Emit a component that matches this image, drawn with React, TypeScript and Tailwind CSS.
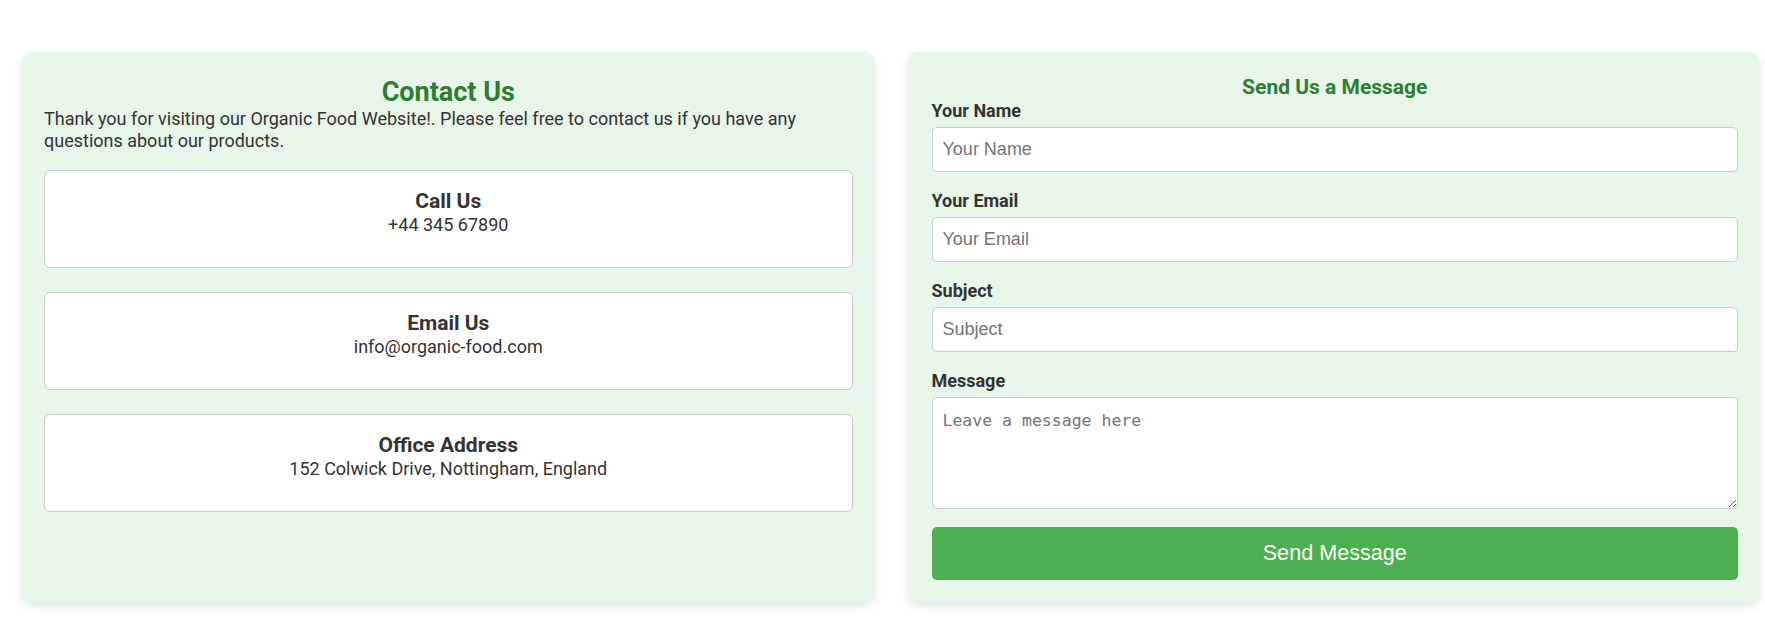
import React from "react";

const infoCards = [
  { title: "Call Us", text: "+44 345 67890" },
  { title: "Email Us", text: "info@organic-food.com" },
  { title: "Office Address", text: "152 Colwick Drive, Nottingham, England" },
];

const fields = [
  { id: "name", label: "Your Name", type: "text" },
  { id: "email", label: "Your Email", type: "email" },
  { id: "subject", label: "Subject", type: "text" },
];

export default function App() {
  return (
    <div className="min-h-[628px] bg-white pt-[52px] pl-[22px] pr-[5px] font-['Roboto',sans-serif] text-[18px] text-[#333]">
      <div className="grid grid-cols-2 gap-[33px]">
        {/* contact info */}
        <div className="rounded-[10px] bg-[#e8f5e9] px-[22px] pt-[24px] shadow-[0_4px_10px_rgba(0,0,0,0.1)]">
          <h2 className="text-center text-[27px] leading-[32px] font-bold text-[#2e7d32]">
            Contact Us
          </h2>
          <p className="mb-[18px] text-[18px] leading-[22px]">
            Thank you for visiting our Organic Food Website!. Please feel free
            to contact us if you have any questions about our products.
          </p>
          <div className="flex flex-col gap-[24px]">
            {infoCards.map((c) => (
              <div
                key={c.title}
                className="rounded-[6px] border border-[#ccc] bg-white px-4 pt-[18px] pb-[16px] text-center"
              >
                <h3 className="text-[21px] leading-[24.6px] font-bold">{c.title}</h3>
                <p className="mb-[16px] text-[18px] leading-[21.4px]">{c.text}</p>
              </div>
            ))}
          </div>
        </div>

        {/* form */}
        <div className="rounded-[10px] bg-[#e8f5e9] pt-[23px] pr-[22px] pb-[22px] pl-[24px] shadow-[0_4px_10px_rgba(0,0,0,0.1)]">
          <h3 className="text-center text-[21px] leading-[24.6px] font-bold text-[#2e7d32]">
            Send Us a Message
          </h3>
          <form className="flex flex-col">
            {fields.map((f) => (
              <div key={f.id} className="mb-[18px]">
                <label
                  htmlFor={f.id}
                  className="mb-[6px] block text-[18px] leading-[21px] font-bold"
                >
                  {f.label}
                </label>
                <input
                  id={f.id}
                  type={f.type}
                  placeholder={f.label}
                  className="block h-[45px] w-full rounded-[5px] border border-[#ccc] bg-white px-[10px] font-['Liberation_Sans',Arial,sans-serif] text-[18px] outline-none placeholder:text-[#757575]"
                />
              </div>
            ))}
            <div className="mb-[18px]">
              <label
                htmlFor="message"
                className="mb-[6px] block text-[18px] leading-[21px] font-bold"
              >
                Message
              </label>
              <textarea
                id="message"
                placeholder="Leave a message here"
                className="block h-[112px] w-full rounded-[5px] border border-[#ccc] bg-white px-[10px] pt-[13px] pb-[10px] font-['DejaVu_Sans_Mono',monospace] text-[16.5px] leading-[20px] outline-none placeholder:text-[#757575]"
              />
            </div>
            <button
              type="button"
              className="h-[53px] w-full rounded-[5px] bg-[#4caf50] font-['Liberation_Sans',Arial,sans-serif] text-[21.6px] text-white"
            >
              Send Message
            </button>
          </form>
        </div>
      </div>
    </div>
  );
}
